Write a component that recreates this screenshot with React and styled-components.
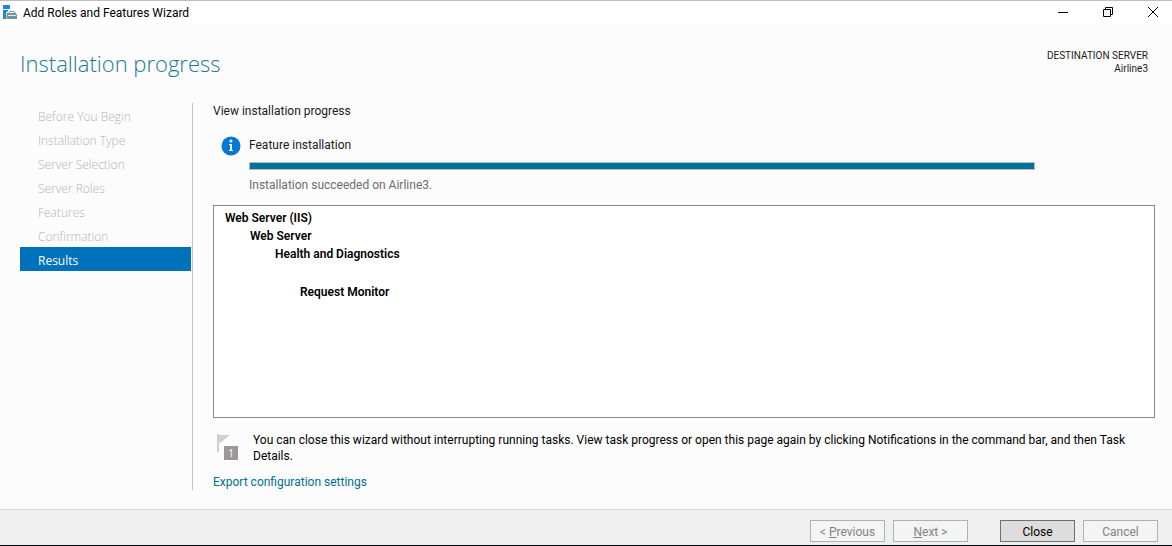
import React, { useState } from "react";
import styled, { createGlobalStyle } from "styled-components";

const GlobalStyle = createGlobalStyle`
  * {
    box-sizing: border-box;
  }
  body {
    margin: 0;
    background: #fcfcfc;
    color: #1a1a1a;
    font-family: Roboto, "Open Sans", sans-serif;
    font-size: 12px;
    line-height: 16px;
  }
`;

const Window = styled.div`
  display: flex;
  flex-direction: column;
  min-height: 100vh;
  border-top: 1px solid #bfbfbf;
  border-bottom: 1px solid #05050f;
`;

const TitleBar = styled.header`
  display: flex;
  align-items: center;
  gap: 6px;
  height: 23px;
  padding-left: 3px;
  background: white;
  color: black;
`;
const WindowTitle = styled.span`
  flex: 1;
`;
const WindowButton = styled.button`
  display: flex;
  align-items: center;
  justify-content: center;
  width: 45px;
  height: 22px;
  padding: 0 0 2px;
  border: none;
  background: transparent;
  color: black;
`;
const WindowButtons = styled.div`
  display: flex;
  margin-right: -3px;
`;

const PageHeader = styled.div`
  display: flex;
  justify-content: space-between;
  padding: 23px 24px 0 20px;
  height: 79px;
`;
const PageTitle = styled.h1`
  margin: 0;
  color: #1b7a96;
  font-family: "Open Sans", sans-serif;
  font-size: 22px;
  font-weight: 300;
  line-height: 32px;
`;
const Destination = styled.div`
  padding-top: 2px;
  font-size: 10px;
  line-height: 13px;
  text-align: right;
`;

const Body = styled.main`
  display: flex;
  flex: 1;
  padding: 0 17px 19px 20px;
`;
const Steps = styled.nav`
  flex: none;
  width: 173px;
  padding-right: 1px;
  border-right: 1px solid #c6c6c6;
`;
const Step = styled.div`
  height: 24px;
  padding: 3px 0 0 18px;
  font-family: "Open Sans", sans-serif;
  font-weight: ${(props) => (props.$active ? 400 : 300)};
  line-height: 21px;
  color: ${(props) => (props.$active ? "white" : "#b4b4b4")};
  background: ${(props) => (props.$active ? "#0072bc" : "transparent")};
`;

const Content = styled.section`
  display: flex;
  flex-direction: column;
  flex: 1;
  padding-left: 20px;
`;
const TaskRow = styled.div`
  display: flex;
  gap: 8px;
  margin: 17px 120px 12px 8px;
`;
const TaskInfo = styled.div`
  display: flex;
  flex-direction: column;
  flex: 1;
  padding-top: 1px;
`;
const Progress = styled.progress`
  display: block;
  appearance: none;
  width: 100%;
  height: 8px;
  margin: 9px 0 7px;
  border: 1px solid #bcbcbc;
  background: #e6e6e6;

  &::-webkit-progress-bar {
    background: #e6e6e6;
  }
  &::-webkit-progress-value {
    background: #007297;
  }
`;
const Status = styled.span`
  color: #6d6d6d;
`;

const ResultPanel = styled.div`
  flex: 1;
  padding: 3px 11px;
  border: 1px solid #828790;
  background: white;
  color: black;
  font-weight: 600;
  line-height: 18px;
`;
const Feature = styled.div`
  padding-left: ${(props) => props.$level * 25}px;
  padding-top: ${(props) => (props.$spaced ? 20 : 0)}px;
`;

const Hint = styled.div`
  display: flex;
  gap: 15px;
  padding: 14px 24px 0 4px;
  color: black;

  svg {
    flex: none;
    margin-top: 2px;
  }
`;
const HintText = styled.p`
  margin: 0;
`;
const ExportLink = styled.a`
  align-self: flex-start;
  margin-top: 10px;
  color: #00708f;
  text-decoration: none;
`;

const Footer = styled.footer`
  display: flex;
  justify-content: flex-end;
  gap: 8px;
  padding: 10px 14px 3px;
  border-top: 1px solid #d9d9d9;
  background: #efefef;
`;
const Button = styled.button`
  width: 75px;
  height: 22px;
  padding: 2px 0 0;
  border: 1px solid #707070;
  background: #dddddd;
  color: black;
  font: inherit;
  line-height: 18px;

  &:disabled {
    border-color: #adb2b5;
    background: #f4f4f4;
    color: #838383;
  }
`;
const ButtonGroup = styled.div`
  display: flex;
  gap: 8px;
  margin-right: 24px;
`;

const steps = [
  "Before You Begin",
  "Installation Type",
  "Server Selection",
  "Server Roles",
  "Features",
  "Confirmation",
  "Results",
];

const features = [
  { name: "Web Server (IIS)", level: 0 },
  { name: "Web Server", level: 1 },
  { name: "Health and Diagnostics", level: 2 },
  { name: "Request Monitor", level: 3, spaced: true },
];

const AppIcon = () => (
  <svg width="14" height="15" viewBox="0 0 14 15" aria-hidden="true">
    <path d="M0 0h7v4H0zM0 5h5v1L3 8v6H0z" fill="#1e88d8" />
    <path d="M5.5 8.5l1.5-2h4l1.5 2" fill="none" stroke="#7592a3" />
    <path d="M4 8h9l1 2v4H3.500v-4z" fill="#7592a3" />
    <path d="M5 10.5h8" stroke="#dfe7ec" />
  </svg>
);

const InfoIcon = () => (
  <svg width="20" height="20" viewBox="0 0 20 20" aria-hidden="true">
    <circle cx="10" cy="10" r="9.5" fill="#0078d4" />
    <circle cx="10" cy="5" r="1.5" fill="white" />
    <path d="M8 8h3v6h1v1H8v-1h1V9H8z" fill="white" />
  </svg>
);

const FlagIcon = () => (
  <svg width="21" height="26" viewBox="0 0 21 26" aria-hidden="true">
    <path d="M0 0h2v18H0z" fill="#d0d0d0" />
    <path d="M2 1h11L3 9H2z" fill="#d0d0d0" />
    <path d="M7 12h14v14H7z" fill="#999799" />
    <text x="14" y="23" fill="white" fontFamily="Open Sans" fontSize="10" textAnchor="middle">
      1
    </text>
  </svg>
);

export default function App() {
  const [current] = useState("Results");

  return (
    <Window>
      <GlobalStyle />
      <TitleBar>
        <AppIcon />
        <WindowTitle>Add Roles and Features Wizard</WindowTitle>
        <WindowButtons>
          <WindowButton aria-label="Minimize">
            <svg width="10" height="10" viewBox="0 0 10 10">
              <path d="M0 5.5h10" stroke="black" />
            </svg>
          </WindowButton>
          <WindowButton aria-label="Restore">
            <svg width="10" height="10" viewBox="0 0 10 10">
              <path d="M.5 2.5h7v7h-7zM2.5 2.5v-2h7v7h-2" fill="none" stroke="black" />
            </svg>
          </WindowButton>
          <WindowButton aria-label="Close window">
            <svg width="10" height="10" viewBox="0 0 10 10">
              <path d="M0 0l10 10M10 0L0 10" stroke="black" />
            </svg>
          </WindowButton>
        </WindowButtons>
      </TitleBar>
      <PageHeader>
        <PageTitle>Installation progress</PageTitle>
        <Destination>
          <div>DESTINATION SERVER</div>
          <div>Airline3</div>
        </Destination>
      </PageHeader>
      <Body>
        <Steps>
          {steps.map((step) => (
            <Step key={step} $active={step === current}>
              {step}
            </Step>
          ))}
        </Steps>
        <Content>
          <div>View installation progress</div>
          <TaskRow>
            <InfoIcon />
            <TaskInfo>
              <label htmlFor="install">Feature installation</label>
              <Progress id="install" value="100" max="100" />
              <Status>Installation succeeded on Airline3.</Status>
            </TaskInfo>
          </TaskRow>
          <ResultPanel>
            {features.map((feature) => (
              <Feature key={feature.name} $level={feature.level} $spaced={feature.spaced}>
                {feature.name}
              </Feature>
            ))}
          </ResultPanel>
          <Hint>
            <FlagIcon />
            <HintText>
              You can close this wizard without interrupting running tasks. View task progress or
              open this page again by clicking Notifications in the command bar, and then Task
              Details.
            </HintText>
          </Hint>
          <ExportLink href="#export">Export configuration settings</ExportLink>
        </Content>
      </Body>
      <Footer>
        <ButtonGroup>
          <Button disabled>
            &lt; <u>P</u>revious
          </Button>
          <Button disabled>
            <u>N</u>ext &gt;
          </Button>
        </ButtonGroup>
        <Button>Close</Button>
        <Button disabled>Cancel</Button>
      </Footer>
    </Window>
  );
}
